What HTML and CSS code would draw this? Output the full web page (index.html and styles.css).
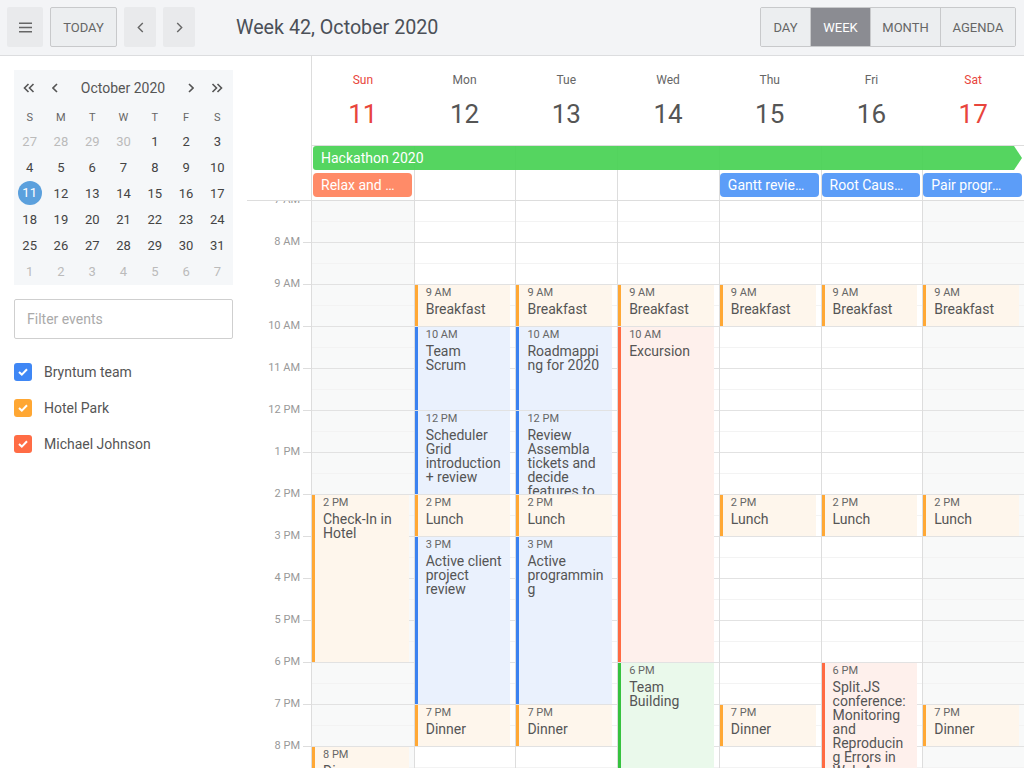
FILE: index.html
```html
<!DOCTYPE html>
<html lang="en">
<head>
    <meta charset="UTF-8">
    <title>Calendar - Week view</title>
    <link rel="stylesheet" href="styles.css">
</head>
<body>
    <!-- Top toolbar -->
    <div class="toolbar">
        <button class="tool-btn menu-btn">
            <svg width="13" height="11" viewBox="0 0 13 11"><path d="M0 1.2h13M0 5.5h13M0 9.8h13" stroke="#666" stroke-width="1.4"/></svg>
        </button>
        <button class="tool-btn today-btn">Today</button>
        <button class="tool-btn nav-btn">
            <svg width="7" height="11" viewBox="0 0 7 11"><path d="M5.8 1L1.3 5.5L5.8 10" stroke="#666" stroke-width="1.4" fill="none"/></svg>
        </button>
        <button class="tool-btn nav-btn">
            <svg width="7" height="11" viewBox="0 0 7 11"><path d="M1.2 1L5.7 5.5L1.2 10" stroke="#666" stroke-width="1.4" fill="none"/></svg>
        </button>
        <div class="title">Week 42, October 2020</div>
        <div class="view-group">
            <button class="v-day">Day</button>
            <button class="v-week active">Week</button>
            <button class="v-month">Month</button>
            <button class="v-agenda">Agenda</button>
        </div>
    </div>

    <div class="main">
        <!-- Sidebar -->
        <aside class="sidebar">
            <div class="mini-cal">
                <div class="mini-head">
                    <span class="mini-nav wide">
                        <svg width="12" height="10" viewBox="0 0 12 10"><path d="M5.5 1L1.5 5L5.5 9M10.5 1L6.5 5L10.5 9" stroke="#555" stroke-width="1.6" fill="none"/></svg>
                    </span>
                    <span class="mini-nav">
                        <svg width="6" height="10" viewBox="0 0 6 10"><path d="M5 1L1 5L5 9" stroke="#555" stroke-width="1.6" fill="none"/></svg>
                    </span>
                    <span class="mini-title">October 2020</span>
                    <span class="mini-nav">
                        <svg width="6" height="10" viewBox="0 0 6 10"><path d="M1 1L5 5L1 9" stroke="#555" stroke-width="1.6" fill="none"/></svg>
                    </span>
                    <span class="mini-nav wide">
                        <svg width="12" height="10" viewBox="0 0 12 10"><path d="M1.5 1L5.5 5L1.5 9M6.5 1L10.5 5L6.5 9" stroke="#555" stroke-width="1.6" fill="none"/></svg>
                    </span>
                </div>
                <div class="mini-grid">
                    <span class="wd">S</span><span class="wd">M</span><span class="wd">T</span><span class="wd">W</span><span class="wd">T</span><span class="wd">F</span><span class="wd">S</span>
                    <span class="other">27</span><span class="other">28</span><span class="other">29</span><span class="other">30</span><span>1</span><span>2</span><span>3</span>
                    <span>4</span><span>5</span><span>6</span><span>7</span><span>8</span><span>9</span><span>10</span>
                    <span><b class="selected">11</b></span><span>12</span><span>13</span><span>14</span><span>15</span><span>16</span><span>17</span>
                    <span>18</span><span>19</span><span>20</span><span>21</span><span>22</span><span>23</span><span>24</span>
                    <span>25</span><span>26</span><span>27</span><span>28</span><span>29</span><span>30</span><span>31</span>
                    <span class="other">1</span><span class="other">2</span><span class="other">3</span><span class="other">4</span><span class="other">5</span><span class="other">6</span><span class="other">7</span>
                </div>
            </div>

            <input class="filter" type="text" placeholder="Filter events">

            <ul class="cal-list">
                <li><span class="check blue"><svg width="10" height="8" viewBox="0 0 10 8"><path d="M1 4L3.8 6.6L9 1.2" stroke="#fff" stroke-width="2" fill="none"/></svg></span>Bryntum team</li>
                <li><span class="check orange"><svg width="10" height="8" viewBox="0 0 10 8"><path d="M1 4L3.8 6.6L9 1.2" stroke="#fff" stroke-width="2" fill="none"/></svg></span>Hotel Park</li>
                <li><span class="check red"><svg width="10" height="8" viewBox="0 0 10 8"><path d="M1 4L3.8 6.6L9 1.2" stroke="#fff" stroke-width="2" fill="none"/></svg></span>Michael Johnson</li>
            </ul>
        </aside>

        <!-- Week view -->
        <div class="calendar">
            <div class="cal-header">
                <div class="axis-spacer"></div>
                <div class="day-heads">
                    <div class="day-head weekend"><div class="day-name">Sun</div><div class="day-num">11</div></div>
                    <div class="day-head"><div class="day-name">Mon</div><div class="day-num">12</div></div>
                    <div class="day-head"><div class="day-name">Tue</div><div class="day-num">13</div></div>
                    <div class="day-head"><div class="day-name">Wed</div><div class="day-num">14</div></div>
                    <div class="day-head"><div class="day-name">Thu</div><div class="day-num">15</div></div>
                    <div class="day-head"><div class="day-name">Fri</div><div class="day-num">16</div></div>
                    <div class="day-head weekend"><div class="day-name">Sat</div><div class="day-num">17</div></div>
                </div>
            </div>

            <div class="allday">
                <div class="axis-spacer"></div>
                <div class="allday-grid">
                    <div class="allday-col c1"></div>
                    <div class="allday-col c2"></div>
                    <div class="allday-col c3"></div>
                    <div class="allday-col c4"></div>
                    <div class="allday-col c5"></div>
                    <div class="allday-col c6"></div>
                    <div class="allday-col c7"></div>

                    <div class="allday-event hackathon">Hackathon 2020</div>
                    <div class="allday-event salmon c1">Relax and official arrival beer</div>
                    <div class="allday-event sky c5">Gantt review</div>
                    <div class="allday-event sky c6">Root Cause Analysis</div>
                    <div class="allday-event sky c7">Pair programming</div>
                </div>
            </div>

            <div class="cal-body">
                <div class="time-axis">
                    <div class="hour">7 AM</div>
                    <div class="hour">8 AM</div>
                    <div class="hour">9 AM</div>
                    <div class="hour">10 AM</div>
                    <div class="hour">11 AM</div>
                    <div class="hour">12 PM</div>
                    <div class="hour">1 PM</div>
                    <div class="hour">2 PM</div>
                    <div class="hour">3 PM</div>
                    <div class="hour">4 PM</div>
                    <div class="hour">5 PM</div>
                    <div class="hour">6 PM</div>
                    <div class="hour">7 PM</div>
                    <div class="hour">8 PM</div>
                    <div class="hour">9 PM</div>
                    <div class="hour">10 PM</div>
                </div>

                <div class="day-cols">
                    <!-- Sun -->
                    <div class="day-col weekend">
                        <div class="event hotel at-14 len-4"><div class="ev-time">2 PM</div><div class="ev-title">Check-In in Hotel</div></div>
                        <div class="event hotel at-20 len-1"><div class="ev-time">8 PM</div><div class="ev-title">Dinner</div></div>
                    </div>
                    <!-- Mon -->
                    <div class="day-col">
                        <div class="event hotel at-9 len-1"><div class="ev-time">9 AM</div><div class="ev-title">Breakfast</div></div>
                        <div class="event team at-10 len-2"><div class="ev-time">10 AM</div><div class="ev-title">Team Scrum</div></div>
                        <div class="event team at-12 len-2"><div class="ev-time">12 PM</div><div class="ev-title">Scheduler Grid introduction + review</div></div>
                        <div class="event hotel at-14 len-1"><div class="ev-time">2 PM</div><div class="ev-title">Lunch</div></div>
                        <div class="event team at-15 len-4"><div class="ev-time">3 PM</div><div class="ev-title">Active client project review</div></div>
                        <div class="event hotel at-19 len-1"><div class="ev-time">7 PM</div><div class="ev-title">Dinner</div></div>
                    </div>
                    <!-- Tue -->
                    <div class="day-col">
                        <div class="event hotel at-9 len-1"><div class="ev-time">9 AM</div><div class="ev-title">Breakfast</div></div>
                        <div class="event team at-10 len-2"><div class="ev-time">10 AM</div><div class="ev-title">Roadmapping for 2020</div></div>
                        <div class="event team at-12 len-2"><div class="ev-time">12 PM</div><div class="ev-title">Review Assembla tickets and decide features to release</div></div>
                        <div class="event hotel at-14 len-1"><div class="ev-time">2 PM</div><div class="ev-title">Lunch</div></div>
                        <div class="event team at-15 len-4"><div class="ev-time">3 PM</div><div class="ev-title">Active programming</div></div>
                        <div class="event hotel at-19 len-1"><div class="ev-time">7 PM</div><div class="ev-title">Dinner</div></div>
                    </div>
                    <!-- Wed -->
                    <div class="day-col">
                        <div class="event hotel at-9 len-1"><div class="ev-time">9 AM</div><div class="ev-title">Breakfast</div></div>
                        <div class="event michael at-10 len-8"><div class="ev-time">10 AM</div><div class="ev-title">Excursion</div></div>
                        <div class="event green at-18 len-4"><div class="ev-time">6 PM</div><div class="ev-title">Team Building</div></div>
                    </div>
                    <!-- Thu -->
                    <div class="day-col">
                        <div class="event hotel at-9 len-1"><div class="ev-time">9 AM</div><div class="ev-title">Breakfast</div></div>
                        <div class="event hotel at-14 len-1"><div class="ev-time">2 PM</div><div class="ev-title">Lunch</div></div>
                        <div class="event hotel at-19 len-1"><div class="ev-time">7 PM</div><div class="ev-title">Dinner</div></div>
                    </div>
                    <!-- Fri -->
                    <div class="day-col">
                        <div class="event hotel at-9 len-1"><div class="ev-time">9 AM</div><div class="ev-title">Breakfast</div></div>
                        <div class="event hotel at-14 len-1"><div class="ev-time">2 PM</div><div class="ev-title">Lunch</div></div>
                        <div class="event michael at-18 len-4"><div class="ev-time">6 PM</div><div class="ev-title">Split.JS conference: Monitoring and Reproducing Errors in Web Apps</div></div>
                    </div>
                    <!-- Sat -->
                    <div class="day-col weekend">
                        <div class="event hotel at-9 len-1"><div class="ev-time">9 AM</div><div class="ev-title">Breakfast</div></div>
                        <div class="event hotel at-14 len-1"><div class="ev-time">2 PM</div><div class="ev-title">Lunch</div></div>
                        <div class="event hotel at-19 len-1"><div class="ev-time">7 PM</div><div class="ev-title">Dinner</div></div>
                    </div>
                </div>
            </div>
        </div>
    </div>
</body>
</html>
```

FILE: styles.css
```css
* {
    box-sizing: border-box;
}

body {
    margin: 0;
    height: 100vh;
    display: flex;
    flex-direction: column;
    overflow: hidden;
    font-family: Roboto, "Liberation Sans", sans-serif;
    color: #555;
    background: #fff;
}

button {
    font-family: inherit;
    cursor: pointer;
}

/* Toolbar */
.toolbar {
    height: 56px;
    flex-shrink: 0;
    display: flex;
    align-items: center;
    gap: 7px;
    padding: 0 8px 1px 7px;
    background: #f3f4f6;
    border-bottom: 1px solid #dcdddf;
}

.tool-btn {
    height: 40px;
    display: flex;
    align-items: center;
    justify-content: center;
    padding: 0;
    border: none;
    border-radius: 2px;
    background: #e9eaec;
    color: #666;
    font-size: 13px;
    text-transform: uppercase;
}

.menu-btn {
    width: 36px;
}

.today-btn {
    width: 67px;
    border: 1px solid #c8c9cb;
    background: #eceef0;
}

.nav-btn {
    width: 32px;
}

.title {
    margin-left: 34px;
    font-size: 19.7px;
    color: #4b5058;
}

.view-group {
    margin-left: auto;
    display: flex;
    height: 40px;
    border: 1px solid #c8c9cb;
    border-radius: 2px;
    overflow: hidden;
}

.view-group button {
    border: none;
    border-left: 1px solid #c8c9cb;
    background: #eceef0;
    color: #666;
    font-size: 13px;
    text-transform: uppercase;
    padding: 0;
}

.view-group button:first-child {
    border-left: none;
}

.v-day { width: 49px; }
.v-week { width: 60px; }
.v-month { width: 70px; }
.v-agenda { width: 75px; }

.view-group button.active {
    background: #8b8c92;
    color: #fff;
}

/* Layout */
.main {
    flex: 1;
    display: flex;
    min-height: 0;
}

.sidebar {
    width: 247px;
    flex-shrink: 0;
    padding: 14px 14px 0;
}

/* Mini calendar */
.mini-cal {
    background: #f5f7f9;
    height: 215px;
}

.mini-head {
    height: 36px;
    display: flex;
    align-items: center;
    padding: 0 2px 0 1px;
}

.mini-nav {
    width: 24px;
    display: flex;
    justify-content: center;
}

.mini-nav.wide {
    width: 28px;
}

.mini-title {
    flex: 1;
    text-align: center;
    font-size: 14px;
    color: #555;
}

.mini-grid {
    display: grid;
    grid-template-columns: repeat(7, 1fr);
    grid-template-rows: 22px repeat(6, 26px);
    font-size: 13px;
    color: #444;
}

.mini-grid span {
    display: flex;
    align-items: center;
    justify-content: center;
}

.mini-grid .wd {
    font-size: 11px;
    color: #666;
}

.mini-grid .other {
    color: #bbb;
}

.selected {
    width: 24px;
    height: 24px;
    line-height: 24px;
    text-align: center;
    border-radius: 50%;
    background: #5ba0dd;
    color: #fff;
    font-weight: normal;
}

/* Filter + calendars */
.filter {
    display: block;
    width: 100%;
    height: 40px;
    margin-top: 14px;
    padding: 0 12px;
    border: 1px solid #cfcfcf;
    border-radius: 2px;
    font-family: inherit;
    font-size: 14px;
    color: #555;
}

.filter::placeholder {
    color: #aaa;
}

.cal-list {
    list-style: none;
    margin: 15px 0 0;
    padding: 0;
}

.cal-list li {
    height: 36px;
    display: flex;
    align-items: center;
    gap: 12px;
    font-size: 14px;
    color: #555;
}

.check {
    width: 18px;
    height: 18px;
    border-radius: 3px;
    display: flex;
    align-items: center;
    justify-content: center;
}

.check.blue { background: #3f87f5; }
.check.orange { background: #ffa733; }
.check.red { background: #ff6c45; }

/* Week view */
.calendar {
    flex: 1;
    min-width: 0;
    display: flex;
    flex-direction: column;
    overflow: hidden;
}

.axis-spacer {
    width: 65px;
    flex-shrink: 0;
    border-right: 1px solid #ddd;
}

.cal-header {
    height: 90px;
    flex-shrink: 0;
    display: flex;
}

.day-heads {
    flex: 1;
    display: grid;
    grid-template-columns: repeat(7, minmax(0, 1fr));
    border-bottom: 1px solid #ddd;
}

.day-head {
    text-align: center;
    padding-top: 16px;
    color: #555;
}

.day-name {
    font-size: 12px;
    line-height: 16px;
    color: #666;
}

.day-num {
    font-size: 26px;
    line-height: 30px;
    margin-top: 11px;
}

.day-head.weekend .day-name,
.day-head.weekend .day-num {
    color: #e8453c;
}

/* All-day row */
.allday {
    height: 55px;
    flex-shrink: 0;
    display: flex;
    border-bottom: 1px solid #ddd;
}

.allday-grid {
    flex: 1;
    display: grid;
    grid-template-columns: repeat(7, minmax(0, 1fr));
    grid-template-rows: 24px 24px 0;
    row-gap: 3px;
}

.allday-col {
    grid-row: 1 / 4;
}

.allday-col + .allday-col {
    border-left: 1px solid #ddd;
}

.c1 { grid-column: 1; }
.c2 { grid-column: 2; }
.c3 { grid-column: 3; }
.c4 { grid-column: 4; }
.c5 { grid-column: 5; }
.c6 { grid-column: 6; }
.c7 { grid-column: 7; }

.allday-event {
    grid-row: 2;
    margin: 0 2px 0 1px;
    padding: 0 14px 0 8px;
    border-radius: 4px;
    color: #fff;
    font-size: 14px;
    line-height: 24px;
    white-space: nowrap;
    overflow: hidden;
    text-overflow: ellipsis;
}

.allday-event.hackathon {
    grid-row: 1;
    grid-column: 1 / 8;
    margin-right: 2px;
    border-radius: 3px 0 0 3px;
    background: rgba(72, 210, 84, 0.93);
    clip-path: polygon(0 0, calc(100% - 8px) 0, 100% 50%, calc(100% - 8px) 100%, 0 100%);
}

.allday-event.salmon { background: #ff8b68; }
.allday-event.sky { background: #5c9df8; }

/* Time grid */
.cal-body {
    flex: 1;
    min-height: 0;
    display: flex;
    overflow: hidden;
}

.time-axis {
    width: 65px;
    flex-shrink: 0;
    border-right: 1px solid #ddd;
}

.hour {
    position: relative;
    height: 42px;
    line-height: 42px;
    padding-right: 11px;
    text-align: right;
    font-size: 11px;
    color: #999;
}

.hour:first-child {
    margin-top: -22px;
}

/* small tick next to the label */
.hour::after {
    content: "";
    position: absolute;
    right: 0;
    top: 21px;
    width: 8px;
    height: 1px;
    background: #ddd;
}

.day-cols {
    flex: 1;
    display: grid;
    grid-template-columns: repeat(7, minmax(0, 1fr));
    align-items: start;
}

.day-col {
    display: grid;
    grid-template-columns: minmax(0, 1fr);
    grid-template-rows: repeat(32, 21px);
    background-image: repeating-linear-gradient(to bottom,
        transparent 0, transparent 20px,
        #f3f3f3 20px, #f3f3f3 21px,
        transparent 21px, transparent 41px,
        #e2e2e2 41px, #e2e2e2 42px);
}

.day-col + .day-col {
    border-left: 1px solid #ddd;
}

.day-col.weekend {
    background-color: #f8f9f9;
}

/* Events */
.event {
    grid-column: 1;
    margin: 0 5px 1px 0;
    padding: 2px 8.5px 0 8px;
    border-left: 3px solid;
    overflow: hidden;
    color: #555;
}

.ev-time {
    font-size: 11px;
    line-height: 12px;
    color: #666;
}

.ev-title {
    margin-top: 3px;
    font-size: 14px;
    line-height: 14px;
    overflow-wrap: break-word;
}

.event.hotel { border-color: #ffa835; background: #fef6ec; }
.event.team { border-color: #3b82f0; background: #eaf1fd; }
.event.michael { border-color: #ff6a42; background: #fef0ec; }
.event.green { border-color: #36c23f; background: #eaf9eb; }

.at-9 { grid-row-start: 5; }
.at-10 { grid-row-start: 7; }
.at-12 { grid-row-start: 11; }
.at-14 { grid-row-start: 15; }
.at-15 { grid-row-start: 17; }
.at-18 { grid-row-start: 23; }
.at-19 { grid-row-start: 25; }
.at-20 { grid-row-start: 27; }

.len-1 { grid-row-end: span 2; }
.len-2 { grid-row-end: span 4; }
.len-4 { grid-row-end: span 8; }
.len-8 { grid-row-end: span 16; }
```
